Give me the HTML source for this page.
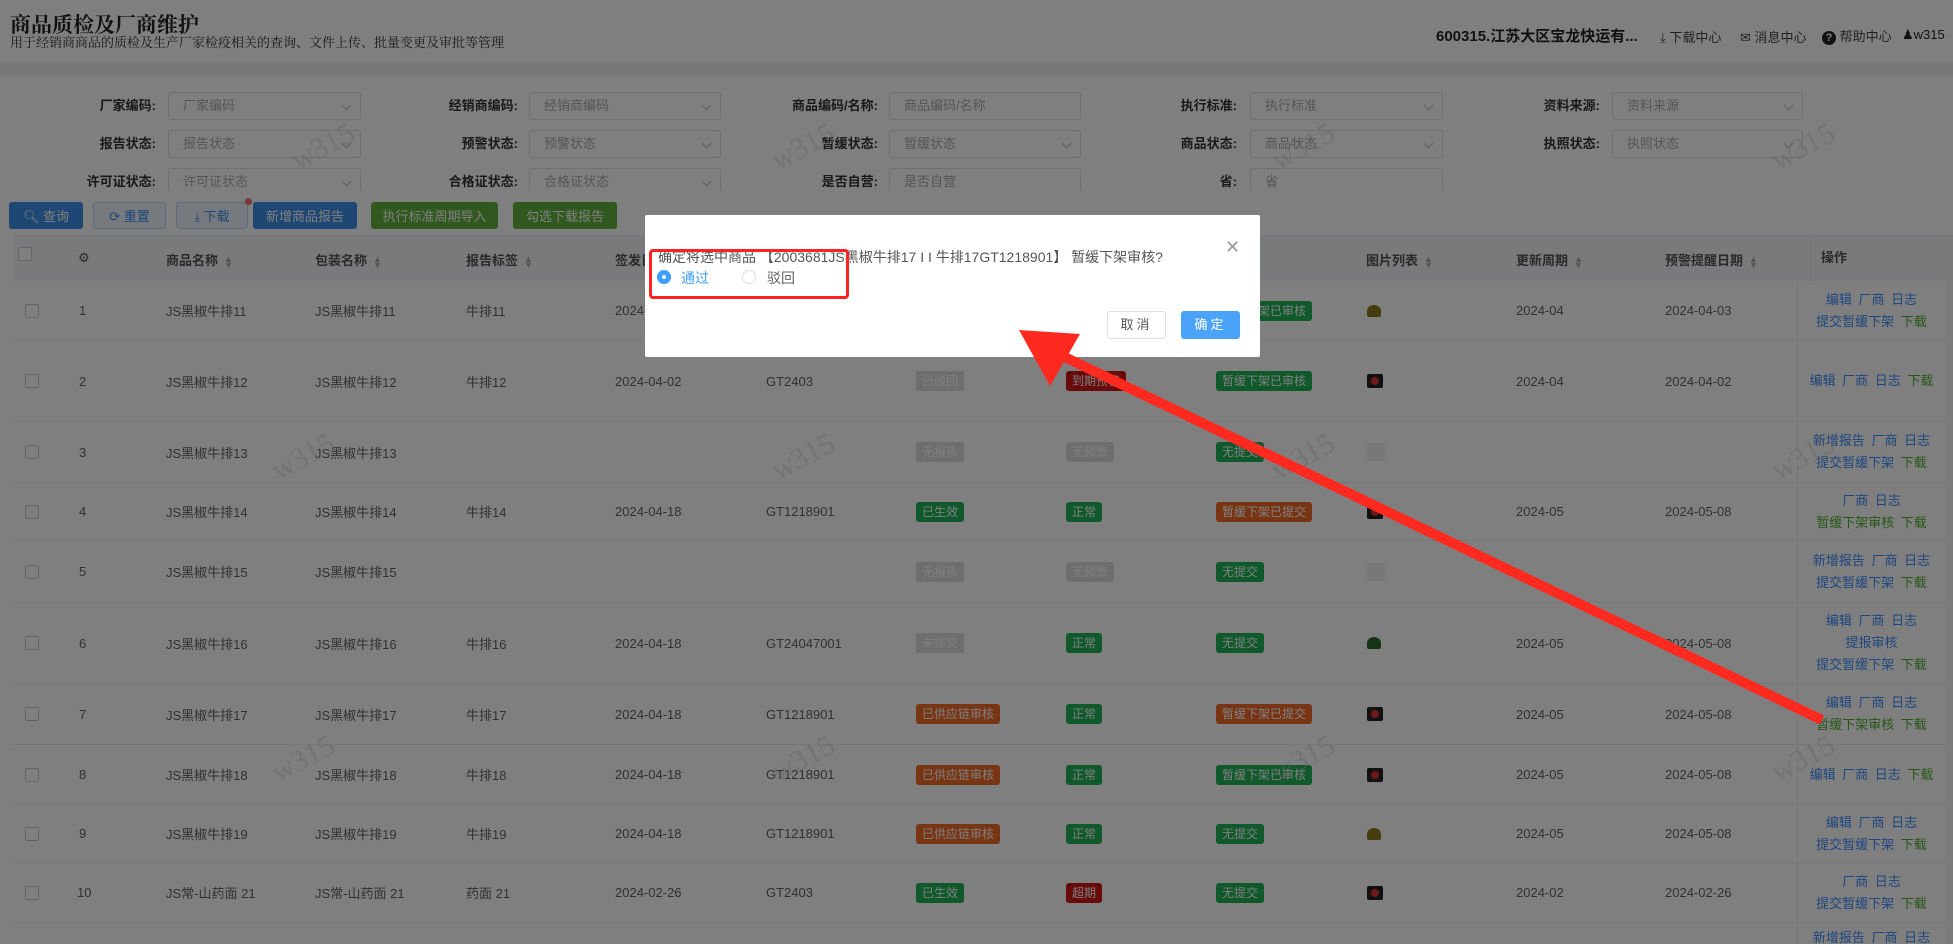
<!DOCTYPE html>
<html style="overflow:hidden;height:944px"><head><meta charset="utf-8">
<style>
*{box-sizing:border-box;margin:0;padding:0}
body{width:1953px;height:944px;overflow:hidden;position:relative;background:#fff;font-family:"Liberation Sans","Noto Sans CJK SC",sans-serif;color:#606266}
#wrap{position:absolute;left:0;top:0;width:1953px;height:944px;overflow:hidden}
.abs{position:absolute}
.hdr{left:0;top:0;width:1953px;height:63px;background:#fff}
.band{left:0;top:63px;width:1953px;height:13px;background:#eef0f3}
.lbl{position:absolute;font-size:13px;font-weight:bold;color:#333;text-align:right;width:120px;line-height:28px}
.inp{position:absolute;height:28px;border:1px solid #dcdfe6;border-radius:3px;font-size:13px;color:#aaa;padding-left:14px;line-height:26px;background:#fff}
.inp i{position:absolute;right:10px;top:9px;width:7px;height:7px;border-right:1px solid #bbb;border-bottom:1px solid #bbb;transform:rotate(45deg)}
.btn{position:absolute;top:202px;height:27px;border-radius:3px;font-size:13px;color:#fff;display:flex;align-items:center;justify-content:center}
.th{left:13px;top:235px;width:1932px;height:46px;background:#f3f4f6}
.th span{position:absolute;top:15px;font-size:13px;font-weight:bold;color:#555}
.sort{display:inline-block;margin-left:6px;font-size:9px;color:#aaa;line-height:6px;vertical-align:middle}
.r{position:absolute;left:13px;width:1932px;border-bottom:1px solid #ebeef5;background:#fff}
.c{position:absolute;top:0;bottom:0;display:flex;align-items:center;font-size:13px;color:#606266;white-space:nowrap}
.cb{width:14px;height:14px;border:1px solid #ccc;border-radius:2px;background:#fff}
.b{color:#fff;font-size:12px;padding:3px 6px;border-radius:3px;line-height:14px}
.g{background:#1fb257}.o{background:#f06a28}.rd{background:#d41616}.gy{background:#dcdcdc}
.op{position:absolute;left:1784px;width:148px;top:0;bottom:0;display:flex;flex-direction:column;justify-content:center;align-items:center;font-size:13px;line-height:22px;color:#3c8dff;background:#fff;border-left:1px solid #eee;word-spacing:3px}
.op .gr{color:#4caf2a}
.img{width:16px;height:14px;background:#222;border-radius:2px;position:relative}
.img:after{content:"";position:absolute;left:4px;top:3px;width:8px;height:8px;border-radius:50%;background:#d33}
.img2{width:18px;height:18px;background:#f0f0f0}
.img3{width:14px;height:12px;background:#8a7a1a;border-radius:50% 50% 2px 2px}
.wm{position:absolute;font-family:"Liberation Serif",serif;font-size:30px;color:rgba(200,200,200,.45);transform:rotate(-28deg);z-index:5}
.ov{left:0;top:0;width:1953px;height:944px;background:rgba(0,0,0,.5);z-index:10}
.dlg{left:645px;top:215px;width:615px;height:142px;background:#fff;border-radius:2px;z-index:11}
</style></head><body><div id="wrap">
<div class="abs hdr">
 <div class="abs" style="left:10px;top:9px;font-size:21px;font-weight:bold;color:#222;font-family:'Liberation Serif','Noto Serif CJK SC',serif">商品质检及厂商维护</div>
 <div class="abs" style="left:10px;top:32px;font-size:13px;color:#333;font-family:'Liberation Serif','Noto Serif CJK SC',serif">用于经销商商品的质检及生产厂家检疫相关的查询、文件上传、批量变更及审批等管理</div>
 <div class="abs" style="left:1436px;top:25px;font-size:15px;font-weight:bold;color:#222">600315.江苏大区宝龙快运有...</div>
 <div class="abs" style="left:1660px;top:27px;font-size:13px;color:#444">⤓ 下载中心</div>
 <div class="abs" style="left:1740px;top:27px;font-size:13px;color:#444">✉ 消息中心</div>
 <div class="abs" style="left:1822px;top:26px;font-size:13px;color:#444"><span style="display:inline-block;width:14px;height:14px;border-radius:50%;background:#222;color:#fff;font-size:11px;text-align:center;line-height:14px;font-weight:bold">?</span> 帮助中心</div>
 <div class="abs" style="left:1902px;top:27px;font-size:13px;color:#222">&#9823;w315</div>
</div>
<div class="abs band"></div>
<div class="abs" style="left:0;top:76px;width:1953px;height:115px;overflow:hidden">
 <div class="lbl" style="left:36px;top:16px">厂家编码:</div><div class="inp" style="left:168px;top:16px;width:193px">厂家编码<i></i></div>
 <div class="lbl" style="left:398px;top:16px">经销商编码:</div><div class="inp" style="left:529px;top:16px;width:192px">经销商编码<i></i></div>
 <div class="lbl" style="left:758px;top:16px">商品编码/名称:</div><div class="inp" style="left:889px;top:16px;width:192px">商品编码/名称</div>
 <div class="lbl" style="left:1117px;top:16px">执行标准:</div><div class="inp" style="left:1250px;top:16px;width:193px">执行标准<i></i></div>
 <div class="lbl" style="left:1480px;top:16px">资料来源:</div><div class="inp" style="left:1612px;top:16px;width:191px">资料来源<i></i></div>
 <div class="lbl" style="left:36px;top:54px">报告状态:</div><div class="inp" style="left:168px;top:54px;width:193px">报告状态<i></i></div>
 <div class="lbl" style="left:398px;top:54px">预警状态:</div><div class="inp" style="left:529px;top:54px;width:192px">预警状态<i></i></div>
 <div class="lbl" style="left:758px;top:54px">暂缓状态:</div><div class="inp" style="left:889px;top:54px;width:192px">暂缓状态<i></i></div>
 <div class="lbl" style="left:1117px;top:54px">商品状态:</div><div class="inp" style="left:1250px;top:54px;width:193px">商品状态<i></i></div>
 <div class="lbl" style="left:1480px;top:54px">执照状态:</div><div class="inp" style="left:1612px;top:54px;width:191px">执照状态<i></i></div>
 <div class="lbl" style="left:36px;top:92px">许可证状态:</div><div class="inp" style="left:168px;top:92px;width:193px">许可证状态<i></i></div>
 <div class="lbl" style="left:398px;top:92px">合格证状态:</div><div class="inp" style="left:529px;top:92px;width:192px">合格证状态<i></i></div>
 <div class="lbl" style="left:758px;top:92px">是否自营:</div><div class="inp" style="left:889px;top:92px;width:192px">是否自营</div>
 <div class="lbl" style="left:1117px;top:92px">省:</div><div class="inp" style="left:1250px;top:92px;width:193px">省</div>
</div>
<div class="btn" style="left:9px;width:74px;background:#3d8ee6">🔍︎ 查询</div>
<div class="btn" style="left:93px;width:73px;background:#ecf5ff;border:1px solid #b3d8ff;color:#3d8ee6">⟳ 重置</div>
<div class="btn" style="left:176px;width:72px;background:#ecf5ff;border:1px solid #b3d8ff;color:#3d8ee6">⤓ 下载</div>
<div class="abs" style="left:245px;top:198px;width:7px;height:7px;border-radius:50%;background:#f56c6c"></div>
<div class="btn" style="left:253px;width:104px;background:#3d8ee6">新增商品报告</div>
<div class="btn" style="left:371px;width:127px;background:#62b03f">执行标准周期导入</div>
<div class="btn" style="left:513px;width:104px;background:#62b03f">勾选下载报告</div>
<div class="abs th">
 <div class="cb abs" style="left:5px;top:12px"></div>
 <span style="left:65px;font-weight:normal">⚙</span>
 <span style="left:153px">商品名称<i class="sort">▲<br>▼</i></span>
 <span style="left:302px">包装名称<i class="sort">▲<br>▼</i></span>
 <span style="left:453px">报告标签<i class="sort">▲<br>▼</i></span>
 <span style="left:602px">签发日期</span>
 <span style="left:1203px">标签<i class="sort">▲<br>▼</i></span>
 <span style="left:1353px">图片列表<i class="sort">▲<br>▼</i></span>
 <span style="left:1503px">更新周期<i class="sort">▲<br>▼</i></span>
 <span style="left:1652px">预警提醒日期<i class="sort">▲<br>▼</i></span>
 <span style="left:1797px;border-left:1px solid #e4e4e4;padding-left:10px;top:0;height:46px;line-height:46px">操作</span>
</div>
<div class="abs" style="left:1945px;top:235px;width:8px;height:709px;background:#f5f5f5"></div>

<div class="r" style="top:281px;height:60px"><div class="c" style="left:12px"><div class="cb"></div></div><div class="c" style="left:66px">1</div><div class="c" style="left:153px">JS黑椒牛排11</div><div class="c" style="left:302px">JS黑椒牛排11</div><div class="c" style="left:453px">牛排11</div><div class="c" style="left:602px">2024-04-03</div><div class="c" style="left:1203px"><span class="b g">暂缓下架已审核</span></div><div class="c" style="left:1354px"><div class="img3"></div></div><div class="c" style="left:1503px">2024-04</div><div class="c" style="left:1652px">2024-04-03</div><div class="op"><div>编辑 厂商 日志</div><div>提交暂缓下架 <span class="gr">下载</span></div></div></div>
<div class="r" style="top:341px;height:81px"><div class="c" style="left:12px"><div class="cb"></div></div><div class="c" style="left:66px">2</div><div class="c" style="left:153px">JS黑椒牛排12</div><div class="c" style="left:302px">JS黑椒牛排12</div><div class="c" style="left:453px">牛排12</div><div class="c" style="left:602px">2024-04-02</div><div class="c" style="left:753px">GT2403</div><div class="c" style="left:903px"><span class="b gy">已驳回</span></div><div class="c" style="left:1053px"><span class="b rd">到期预警</span></div><div class="c" style="left:1203px"><span class="b g">暂缓下架已审核</span></div><div class="c" style="left:1354px"><div class="img"></div></div><div class="c" style="left:1503px">2024-04</div><div class="c" style="left:1652px">2024-04-02</div><div class="op"><div>编辑 厂商 日志 <span class="gr">下载</span></div></div></div>
<div class="r" style="top:422px;height:61px"><div class="c" style="left:12px"><div class="cb"></div></div><div class="c" style="left:66px">3</div><div class="c" style="left:153px">JS黑椒牛排13</div><div class="c" style="left:302px">JS黑椒牛排13</div><div class="c" style="left:903px"><span class="b gy">无报告</span></div><div class="c" style="left:1053px"><span class="b gy">无预警</span></div><div class="c" style="left:1203px"><span class="b g">无提交</span></div><div class="c" style="left:1354px"><div class="img2"></div></div><div class="op"><div>新增报告 厂商 日志</div><div>提交暂缓下架 <span class="gr">下载</span></div></div></div>
<div class="r" style="top:483px;height:58px"><div class="c" style="left:12px"><div class="cb"></div></div><div class="c" style="left:66px">4</div><div class="c" style="left:153px">JS黑椒牛排14</div><div class="c" style="left:302px">JS黑椒牛排14</div><div class="c" style="left:453px">牛排14</div><div class="c" style="left:602px">2024-04-18</div><div class="c" style="left:753px">GT1218901</div><div class="c" style="left:903px"><span class="b g">已生效</span></div><div class="c" style="left:1053px"><span class="b g">正常</span></div><div class="c" style="left:1203px"><span class="b o">暂缓下架已提交</span></div><div class="c" style="left:1354px"><div class="img"></div></div><div class="c" style="left:1503px">2024-05</div><div class="c" style="left:1652px">2024-05-08</div><div class="op"><div>厂商 日志</div><div class="gr">暂缓下架审核 下载</div></div></div>
<div class="r" style="top:541px;height:62px"><div class="c" style="left:12px"><div class="cb"></div></div><div class="c" style="left:66px">5</div><div class="c" style="left:153px">JS黑椒牛排15</div><div class="c" style="left:302px">JS黑椒牛排15</div><div class="c" style="left:903px"><span class="b gy">无报告</span></div><div class="c" style="left:1053px"><span class="b gy">无预警</span></div><div class="c" style="left:1203px"><span class="b g">无提交</span></div><div class="c" style="left:1354px"><div class="img2"></div></div><div class="op"><div>新增报告 厂商 日志</div><div>提交暂缓下架 <span class="gr">下载</span></div></div></div>
<div class="r" style="top:603px;height:81px"><div class="c" style="left:12px"><div class="cb"></div></div><div class="c" style="left:66px">6</div><div class="c" style="left:153px">JS黑椒牛排16</div><div class="c" style="left:302px">JS黑椒牛排16</div><div class="c" style="left:453px">牛排16</div><div class="c" style="left:602px">2024-04-18</div><div class="c" style="left:753px">GT24047001</div><div class="c" style="left:903px"><span class="b gy">未提交</span></div><div class="c" style="left:1053px"><span class="b g">正常</span></div><div class="c" style="left:1203px"><span class="b g">无提交</span></div><div class="c" style="left:1354px"><div class="img3" style="background:#2a6a2a"></div></div><div class="c" style="left:1503px">2024-05</div><div class="c" style="left:1652px">2024-05-08</div><div class="op"><div>编辑 厂商 日志</div><div>提报审核</div><div>提交暂缓下架 <span class="gr">下载</span></div></div></div>
<div class="r" style="top:684px;height:61px"><div class="c" style="left:12px"><div class="cb"></div></div><div class="c" style="left:66px">7</div><div class="c" style="left:153px">JS黑椒牛排17</div><div class="c" style="left:302px">JS黑椒牛排17</div><div class="c" style="left:453px">牛排17</div><div class="c" style="left:602px">2024-04-18</div><div class="c" style="left:753px">GT1218901</div><div class="c" style="left:903px"><span class="b o">已供应链审核</span></div><div class="c" style="left:1053px"><span class="b g">正常</span></div><div class="c" style="left:1203px"><span class="b o">暂缓下架已提交</span></div><div class="c" style="left:1354px"><div class="img"></div></div><div class="c" style="left:1503px">2024-05</div><div class="c" style="left:1652px">2024-05-08</div><div class="op"><div>编辑 厂商 日志</div><div class="gr">暂缓下架审核 下载</div></div></div>
<div class="r" style="top:745px;height:60px"><div class="c" style="left:12px"><div class="cb"></div></div><div class="c" style="left:66px">8</div><div class="c" style="left:153px">JS黑椒牛排18</div><div class="c" style="left:302px">JS黑椒牛排18</div><div class="c" style="left:453px">牛排18</div><div class="c" style="left:602px">2024-04-18</div><div class="c" style="left:753px">GT1218901</div><div class="c" style="left:903px"><span class="b o">已供应链审核</span></div><div class="c" style="left:1053px"><span class="b g">正常</span></div><div class="c" style="left:1203px"><span class="b g">暂缓下架已审核</span></div><div class="c" style="left:1354px"><div class="img"></div></div><div class="c" style="left:1503px">2024-05</div><div class="c" style="left:1652px">2024-05-08</div><div class="op"><div>编辑 厂商 日志 <span class="gr">下载</span></div></div></div>
<div class="r" style="top:805px;height:58px"><div class="c" style="left:12px"><div class="cb"></div></div><div class="c" style="left:66px">9</div><div class="c" style="left:153px">JS黑椒牛排19</div><div class="c" style="left:302px">JS黑椒牛排19</div><div class="c" style="left:453px">牛排19</div><div class="c" style="left:602px">2024-04-18</div><div class="c" style="left:753px">GT1218901</div><div class="c" style="left:903px"><span class="b o">已供应链审核</span></div><div class="c" style="left:1053px"><span class="b g">正常</span></div><div class="c" style="left:1203px"><span class="b g">无提交</span></div><div class="c" style="left:1354px"><div class="img3"></div></div><div class="c" style="left:1503px">2024-05</div><div class="c" style="left:1652px">2024-05-08</div><div class="op"><div>编辑 厂商 日志</div><div>提交暂缓下架 <span class="gr">下载</span></div></div></div>
<div class="r" style="top:863px;height:60px"><div class="c" style="left:12px"><div class="cb"></div></div><div class="c" style="left:64px">10</div><div class="c" style="left:153px">JS常-山药面 21</div><div class="c" style="left:302px">JS常-山药面 21</div><div class="c" style="left:453px">药面 21</div><div class="c" style="left:602px">2024-02-26</div><div class="c" style="left:753px">GT2403</div><div class="c" style="left:903px"><span class="b g">已生效</span></div><div class="c" style="left:1053px"><span class="b rd">超期</span></div><div class="c" style="left:1203px"><span class="b g">无提交</span></div><div class="c" style="left:1354px"><div class="img"></div></div><div class="c" style="left:1503px">2024-02</div><div class="c" style="left:1652px">2024-02-26</div><div class="op"><div>厂商 日志</div><div>提交暂缓下架 <span class="gr">下载</span></div></div></div>
<div class="r" style="top:923px;height:21px;border-bottom:none"><div class="op" style="justify-content:flex-start;padding-top:4px"><div>新增报告 厂商 日志</div></div></div>

<div class="wm" style="left:290px;top:130px">w315</div>
<div class="wm" style="left:770px;top:130px">w315</div>
<div class="wm" style="left:1270px;top:130px">w315</div>
<div class="wm" style="left:1770px;top:130px">w315</div>
<div class="wm" style="left:270px;top:440px">w315</div>
<div class="wm" style="left:770px;top:440px">w315</div>
<div class="wm" style="left:1270px;top:440px">w315</div>
<div class="wm" style="left:1770px;top:440px">w315</div>
<div class="wm" style="left:270px;top:742px">w315</div>
<div class="wm" style="left:770px;top:742px">w315</div>
<div class="wm" style="left:1270px;top:742px">w315</div>
<div class="wm" style="left:1770px;top:742px">w315</div>

<div class="abs ov"></div>
<div class="abs dlg">
 <div class="abs" style="left:13px;top:32px;font-size:14px;color:#555;white-space:nowrap">确定将选中商品 【2003681JS黑椒牛排17 I I 牛排17GT1218901】 暂缓下架审核?</div>
 <div class="abs" style="left:580px;top:22px;font-size:18px;color:#999">✕</div>
 <div class="abs" style="left:12px;top:55px;width:14px;height:14px;border-radius:50%;background:#409eff"><div style="position:absolute;left:5px;top:5px;width:4px;height:4px;border-radius:50%;background:#fff"></div></div>
 <div class="abs" style="left:36px;top:53px;font-size:14px;color:#409eff">通过</div>
 <div class="abs" style="left:97px;top:55px;width:14px;height:14px;border-radius:50%;border:1px solid #dcdfe6"></div>
 <div class="abs" style="left:122px;top:53px;font-size:14px;color:#606266">驳回</div>
 <div class="abs" style="left:462px;top:96px;width:59px;height:28px;border:1px solid #dcdfe6;border-radius:3px;font-size:13px;color:#555;text-align:center;line-height:26px;letter-spacing:3px">取消</div>
 <div class="abs" style="left:536px;top:96px;width:59px;height:28px;background:#4aa3f8;border-radius:3px;font-size:13px;color:#fff;text-align:center;line-height:28px;letter-spacing:3px">确定</div>
</div>
<div class="abs" style="left:649px;top:249px;width:200px;height:50px;border:3px solid #ff2222;border-radius:4px;z-index:12"></div>
<svg class="abs" style="left:0;top:0;z-index:13" width="1953" height="944"><line x1="1822" y1="720" x2="1050" y2="350" stroke="#ff2a1f" stroke-width="10"/><polygon points="1019,330 1080,334 1050,386" fill="#ff2a1f"/></svg>
</div></body></html>
